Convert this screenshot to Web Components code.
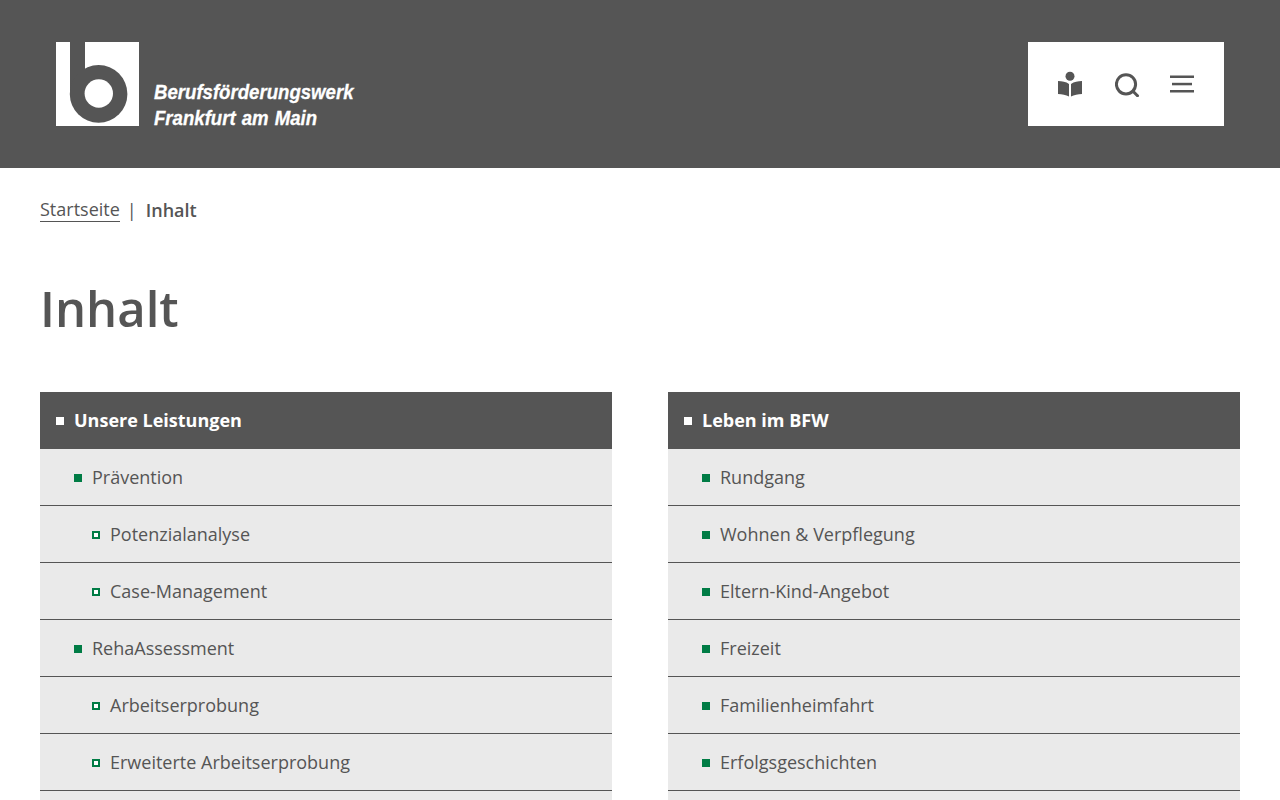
<!DOCTYPE html>
<html lang="de">
<head>
<meta charset="utf-8">
<title>Inhalt</title>
<style>
html, body { margin: 0; height: 800px; overflow: hidden; background: #fff; }
body { font-family: "Open Sans", sans-serif; color: #555; }
</style>
</head>
<body>
<bfw-header></bfw-header>
<bfw-breadcrumb current="Inhalt">
  <a href="#">Startseite</a>
</bfw-breadcrumb>
<bfw-title>Inhalt</bfw-title>
<toc-grid>
  <toc-column title="Unsere Leistungen">
    <toc-item>Prävention</toc-item>
    <toc-item level="2">Potenzialanalyse</toc-item>
    <toc-item level="2">Case-Management</toc-item>
    <toc-item>RehaAssessment</toc-item>
    <toc-item level="2">Arbeitserprobung</toc-item>
    <toc-item level="2">Erweiterte Arbeitserprobung</toc-item>
    <toc-item level="2"></toc-item>
  </toc-column>
  <toc-column title="Leben im BFW">
    <toc-item>Rundgang</toc-item>
    <toc-item>Wohnen &amp; Verpflegung</toc-item>
    <toc-item>Eltern-Kind-Angebot</toc-item>
    <toc-item>Freizeit</toc-item>
    <toc-item>Familienheimfahrt</toc-item>
    <toc-item>Erfolgsgeschichten</toc-item>
    <toc-item></toc-item>
  </toc-column>
</toc-grid>

<script>
class BfwHeader extends HTMLElement {
  constructor() {
    super();
    this.attachShadow({ mode: 'open' }).innerHTML = `
    <style>
    :host { display: flex; justify-content: space-between; align-items: stretch; height: 84px; padding: 42px 56px; background: #555; }
    .brand { display: flex; align-items: flex-end; color: #fff; text-decoration: none; }
    .brand svg { display: block; width: 83px; height: 84px; }
    .name {
        margin: 0 0 -5px 15px;
        font: italic 700 20px/26px "Liberation Sans", sans-serif;
        -webkit-text-stroke: 0.3px #fff;
        word-spacing: 1px;
        white-space: nowrap;
        transform: scaleX(0.93);
        transform-origin: left center;
    }
    .tools { display: flex; align-items: center; width: 196px; background: #fff; }
    .tools svg { display: block; }
    </style>
    <a class="brand" href="#">
      <svg viewBox="0 0 83 84">
        <rect width="83" height="84" fill="#fff"/>
        <path fill="#555" d="M14 0h15v52h-15z"/>
        <circle cx="42.600" cy="51.900" r="28.800" fill="#555"/>
        <circle cx="42.800" cy="51.500" r="14.200" fill="#fff"/>
      </svg>
      <div class="name">Berufsförderungswerk<br>Frankfurt am Main</div>
    </a>
    <div class="tools">
      <svg style="margin-left:30px" width="24" height="26" viewBox="0 0 24 26" fill="#555">
        <circle cx="12" cy="5.200" r="4.500"/>
        <path d="M0 10c4 0 8 .8 11 3v12.500c-3-1.800-7-2.600-11-2.600zM24 10c-4 0-8 .8-11 3v12.500c3-1.800 7-2.600 11-2.600z"/>
      </svg>
      <svg style="margin-left:33px" width="26" height="26" viewBox="0 0 26 26" fill="none" stroke="#555" stroke-width="3">
        <circle cx="11" cy="13.300" r="9.600"/>
        <path d="M18 20.300l4.500 4.500" stroke-linecap="round"/>
      </svg>
      <svg style="margin-left:29px" width="24" height="18" viewBox="0 0 24 18" fill="#555">
        <rect width="24" height="2.500" y="0.500"/>
        <rect x="2" width="20" height="2.500" y="7.800"/>
        <rect width="24" height="2.500" y="15"/>
      </svg>
    </div>`;
  }
}

class BfwBreadcrumb extends HTMLElement {
  constructor() {
    super();
    this.attachShadow({ mode: 'open' }).innerHTML = `
    <style>
    :host { display: flex; padding: 30px 40px 0; font-size: 18px; line-height: 25px; color: #555; }
    ::slotted(a) { align-self: flex-start; color: #555; text-decoration: none; border-bottom: 1px solid #555; line-height: 23px; }
    .sep { margin: 0 9px 0 7px; }
    b { font-weight: 600; }
    </style>
    <slot></slot><span class="sep">|</span><b></b>`;
    this.shadowRoot.querySelector('b').textContent = this.getAttribute('current');
  }
}

class BfwTitle extends HTMLElement {
  constructor() {
    super();
    this.attachShadow({ mode: 'open' }).innerHTML = `
    <style>
    :host { display: block; padding: 0 40px; }
    h1 { margin: 53px 0 51px; font-size: 49px; line-height: 65px; font-weight: 600; color: #555; }
    </style>
    <h1><slot></slot></h1>`;
  }
}

class TocGrid extends HTMLElement {
  constructor() {
    super();
    this.attachShadow({ mode: 'open' }).innerHTML = `
    <style>
    :host { display: grid; grid-template-columns: 572px 572px; gap: 56px; padding: 0 40px; }
    </style>
    <slot></slot>`;
  }
}

class TocColumn extends HTMLElement {
  constructor() {
    super();
    this.attachShadow({ mode: 'open' }).innerHTML = `
    <style>
    :host { display: block; }
    .head {
        display: flex; align-items: center; height: 57px; padding-left: 16px;
        background: #555; color: #fff; font-size: 18px; font-weight: 700;
    }
    .head i { width: 8px; height: 8px; margin-right: 10px; background: #fff; }
    .head span { padding-bottom: 2px; }
    </style>
    <div class="head"><i></i><span></span></div>
    <slot></slot>`;
    this.shadowRoot.querySelector('span').textContent = this.getAttribute('title');
    this.removeAttribute('title');
  }
}

class TocItem extends HTMLElement {
  constructor() {
    super();
    this.attachShadow({ mode: 'open' }).innerHTML = `
    <style>
    :host {
        display: flex; align-items: center; box-sizing: border-box; height: 57px; padding-left: 34px;
        background: #eaeaea; border-bottom: 1px solid #555; color: #555; font-size: 18px;
    }
    :host([level="2"]) { padding-left: 52px; }
    i { box-sizing: border-box; width: 8px; height: 8px; margin: 2px 10px 0 0; background: #007c45; }
    :host([level="2"]) i { background: #fff; border: 2px solid #007c45; }
    </style>
    <i></i><slot></slot>`;
  }
}

customElements.define('bfw-header', BfwHeader);
customElements.define('bfw-breadcrumb', BfwBreadcrumb);
customElements.define('bfw-title', BfwTitle);
customElements.define('toc-grid', TocGrid);
customElements.define('toc-column', TocColumn);
customElements.define('toc-item', TocItem);
</script>
</body>
</html>
